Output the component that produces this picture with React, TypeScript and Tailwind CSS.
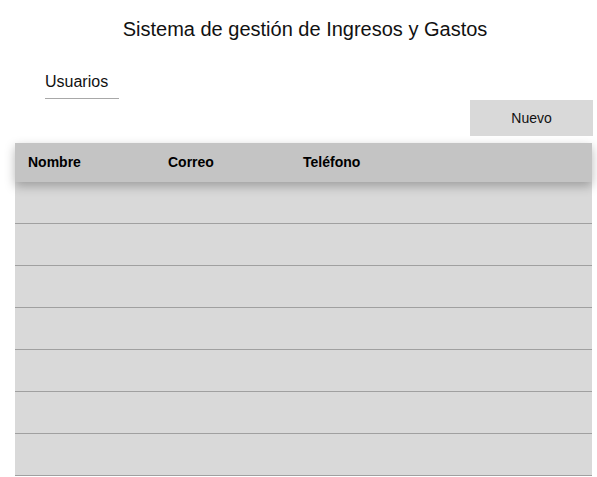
import React from "react";

const rows = [0, 1, 2, 3, 4, 5, 6];

export default function App() {
  return (
    <div
      className="w-[597px] h-[477px] overflow-hidden bg-white text-[#111]"
      style={{ fontFamily: '"Liberation Sans", Arial, sans-serif' }}
    >
      <div className="pt-[18px] pl-[13px] flex justify-center">
        <h1 className="text-[20px] leading-[23px] font-normal">
          Sistema de gestión de Ingresos y Gastos
        </h1>
      </div>
      <div className="mt-[32px] ml-[45px] w-[74px] border-b border-[#a8a8a8] pb-[7px]">
        <span className="block text-[16px] leading-[18px]">Usuarios</span>
      </div>
      <div className="flex justify-end mr-[4px] mt-[1px]">
        <button className="w-[123px] h-[36px] bg-[#d9d9d9] text-[14px] leading-[16px] text-[#111]">
          Nuevo
        </button>
      </div>
      <div className="mt-[7px] ml-[15px] mr-[5px]">
        <div className="relative z-10 h-[39px] bg-[#c4c4c4] shadow-[0_4px_10px_rgba(0,0,0,0.28)] flex items-center pl-[13px] text-[14px] font-bold text-black">
          <div className="w-[140px]">Nombre</div>
          <div className="w-[135px]">Correo</div>
          <div>Teléfono</div>
        </div>
        {rows.map((r) => (
          <div
            key={r}
            className="h-[42px] bg-[#d9d9d9] border-b border-[#a0a0a0]"
          />
        ))}
      </div>
    </div>
  );
}
